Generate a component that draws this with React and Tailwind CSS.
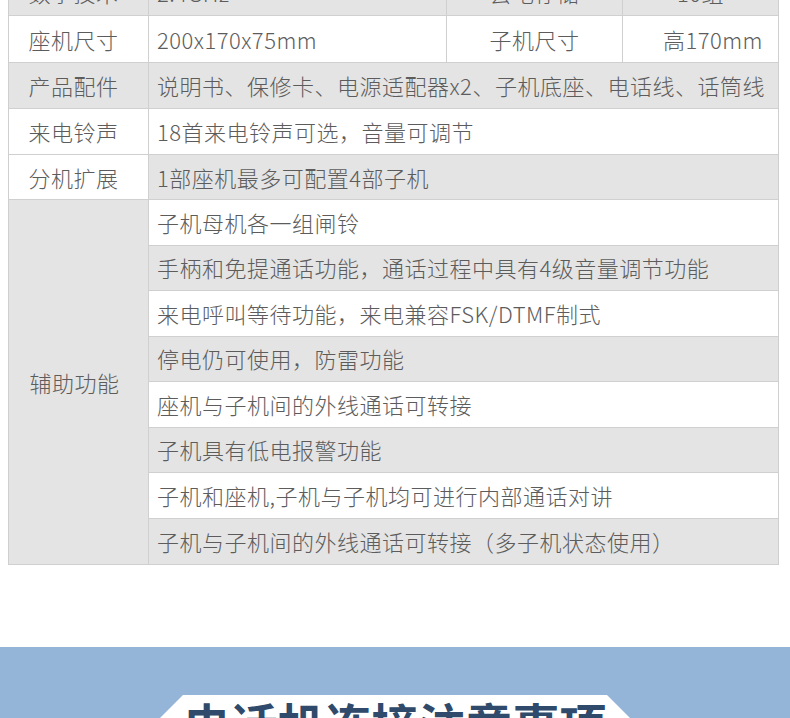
const cjk = { fontFamily: '"Noto Sans CJK SC", "Noto Sans", sans-serif' };

const subRows = [
  "子机母机各一组闸铃",
  "手柄和免提通话功能，通话过程中具有4级音量调节功能",
  "来电呼叫等待功能，来电兼容FSK/DTMF制式",
  "停电仍可使用，防雷功能",
  "座机与子机间的外线通话可转接",
  "子机具有低电报警功能",
  "子机和座机,子机与子机均可进行内部通话对讲",
  "子机与子机间的外线通话可转接（多子机状态使用）",
];

function Row({ label, labelBg, valueBg, h = "h-[46px]", children }) {
  return (
    <div className={`flex ${h} border-b border-[#d0d0d0]`}>
      <div className={`w-[140px] shrink-0 flex items-center justify-center pr-[10px] border-r border-[#d0d0d0] ${labelBg}`}>
        {label}
      </div>
      <div className={`flex-1 flex items-center ${valueBg}`}>{children}</div>
    </div>
  );
}

export default function App() {
  return (
    <div className="h-[718px] w-[790px] overflow-hidden bg-white text-[22px] tracking-[0.5px] text-[#5c5c5c] font-light" style={cjk}>
      <div className="-mt-[31px] ml-2 w-[771px] border-l border-r border-b border-[#cfcfcf]">
        <div className="flex h-[47px] border-b border-[#d0d0d0] bg-[#e4e4e4]">
          <div className="w-[140px] shrink-0 flex items-center justify-center pr-[10px] border-r border-[#d0d0d0]">数字技术</div>
          <div className="w-[298px] shrink-0 flex items-center pl-[8px] border-r border-[#d0d0d0]">2.4GHz</div>
          <div className="w-[176px] shrink-0 flex items-center justify-center border-r border-[#d0d0d0]">去电存储</div>
          <div className="flex-1 flex items-center justify-center">10组</div>
        </div>
        <div className="flex h-[47px] border-b border-[#d0d0d0] bg-white">
          <div className="w-[140px] shrink-0 flex items-center justify-center pr-[10px] border-r border-[#d0d0d0]">座机尺寸</div>
          <div className="w-[298px] shrink-0 flex items-center pl-[8px] border-r border-[#d0d0d0]">200x170x75mm</div>
          <div className="w-[176px] shrink-0 flex items-center justify-center border-r border-[#d0d0d0]">子机尺寸</div>
          <div className="flex-1 flex items-center justify-end pr-[15px]">高170mm</div>
        </div>
        <Row label="产品配件" labelBg="bg-[#e4e4e4]" valueBg="bg-[#e4e4e4]">
          <span className="pl-[8px]">说明书、保修卡、电源适配器x2、子机底座、电话线、话筒线</span>
        </Row>
        <Row label="来电铃声" labelBg="bg-white" valueBg="bg-white">
          <span className="pl-[8px]">18首来电铃声可选，音量可调节</span>
        </Row>
        <Row label="分机扩展" labelBg="bg-white" valueBg="bg-[#e4e4e4]" h="h-[45px]">
          <span className="pl-[8px]">1部座机最多可配置4部子机</span>
        </Row>
        <div className="flex">
          <div className="w-[140px] shrink-0 flex items-center justify-center pr-[8px] border-r border-[#d0d0d0] bg-[#e4e4e4]">辅助功能</div>
          <div className="flex-1 flex flex-col">
            {subRows.map((t, i) => (
              <div
                key={i}
                className={`h-[45.5px] flex items-center pl-[8px] ${i < subRows.length - 1 ? "border-b border-[#d0d0d0]" : ""} ${i % 2 === 0 ? "bg-white" : "bg-[#e4e4e4]"}`}
              >
                {t}
              </div>
            ))}
          </div>
        </div>
      </div>

      <div className="mt-[82px] h-[72px] bg-[#94b4d8] pt-[48px] flex justify-center">
        <div className="w-[520px] h-[96px] bg-white flex justify-center [clip-path:polygon(48px_0,calc(100%-48px)_0,100%_50%,calc(100%-48px)_100%,48px_100%,0_50%)]">
          <span className="text-[47px] leading-[56px] tracking-normal font-bold text-[#2f4a6a]">电话机连接注意事项</span>
        </div>
      </div>
    </div>
  );
}
